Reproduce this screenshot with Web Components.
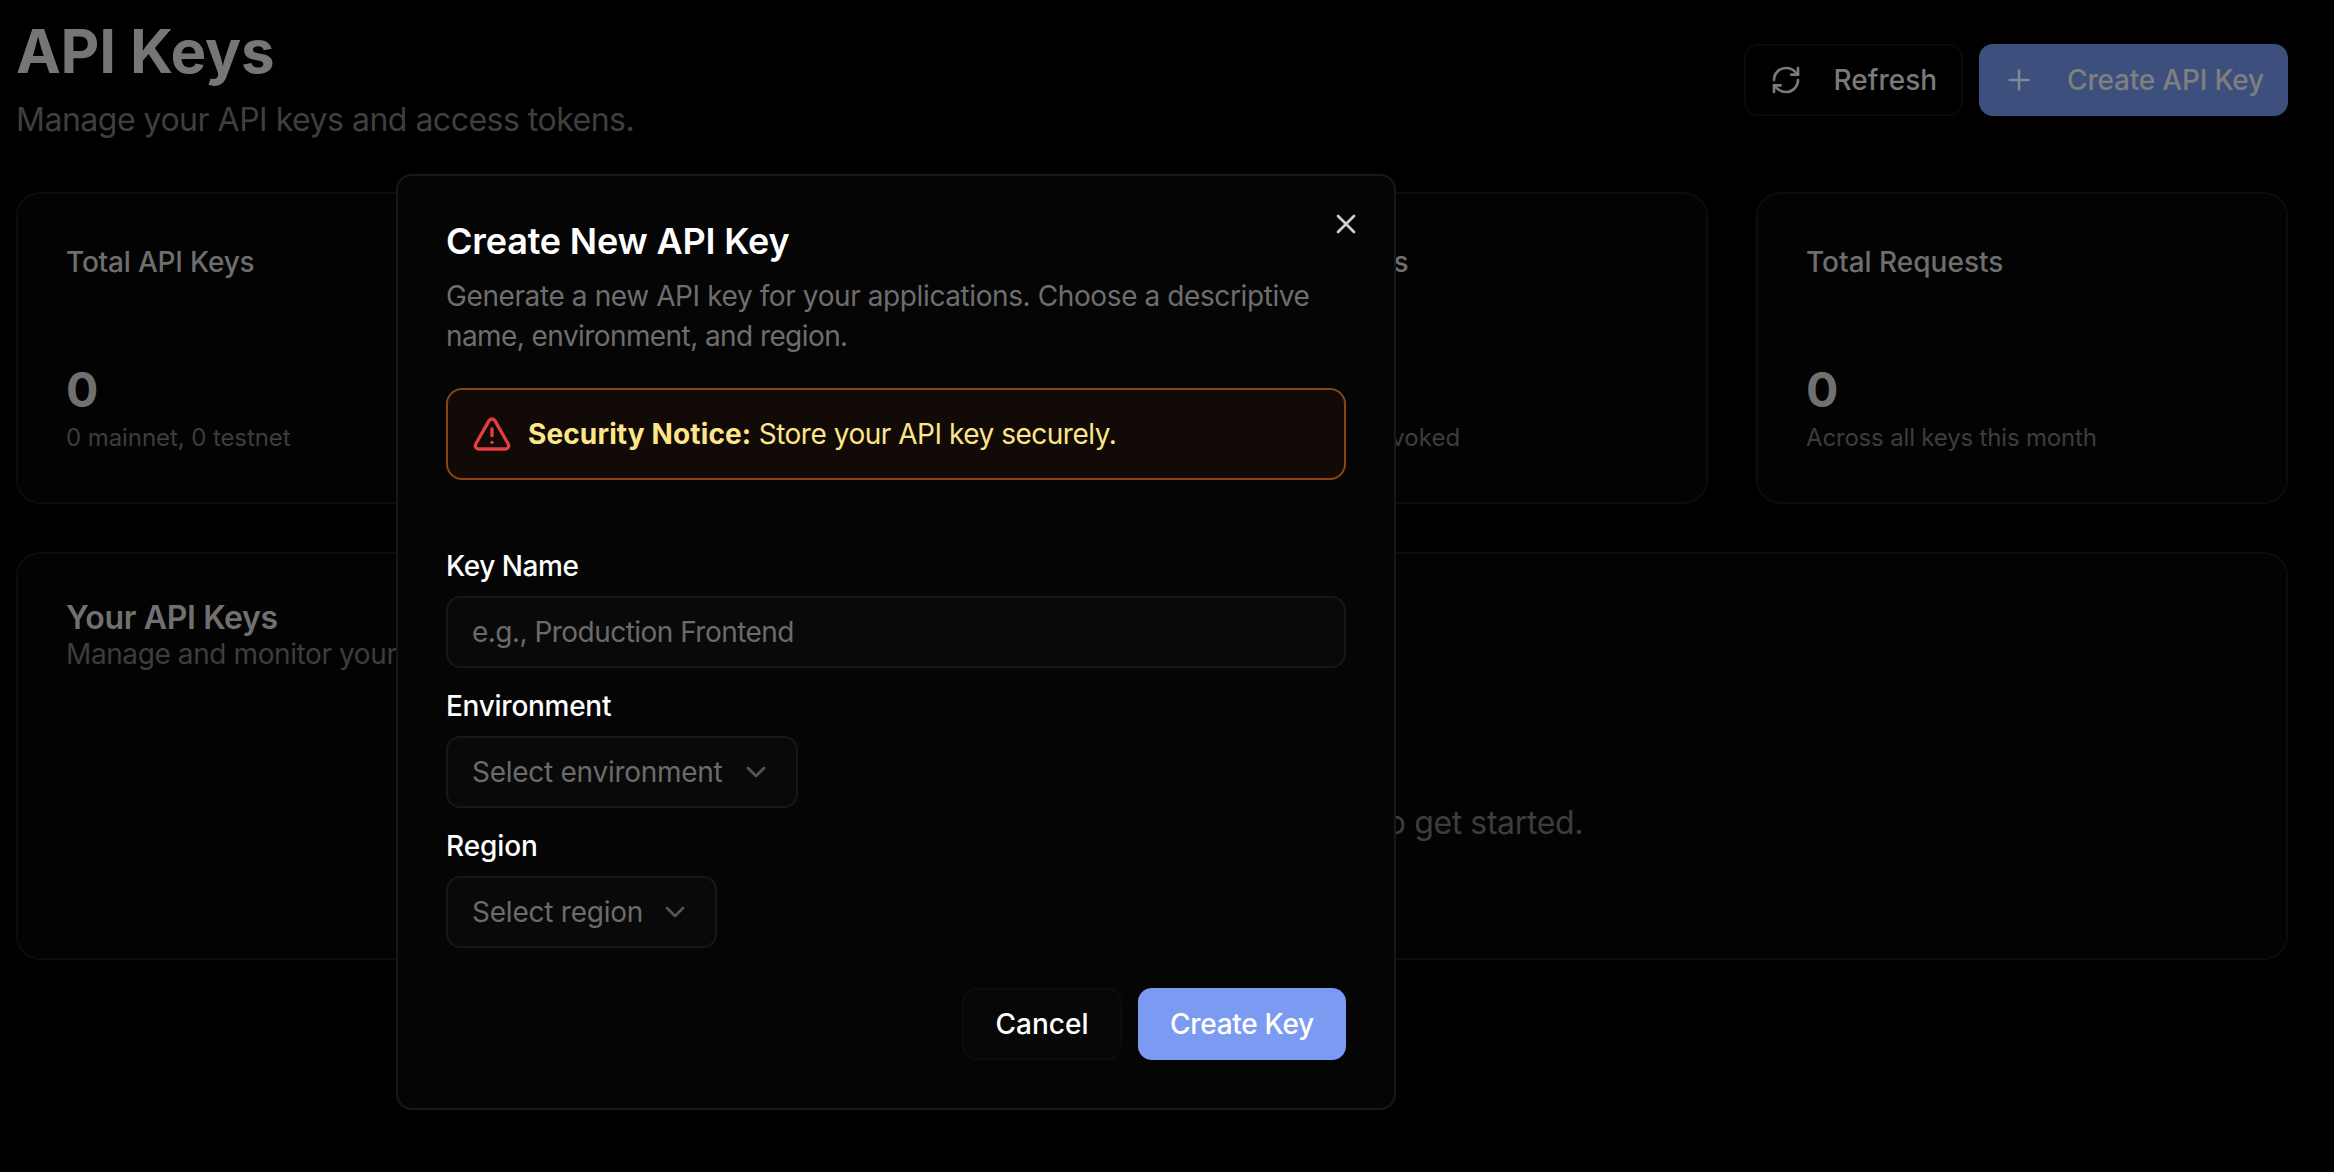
<!doctype html>
<html><head><meta charset="utf-8"><style>
html,body{margin:0;background:#000;height:100%;overflow:hidden}
body{font-family:Inter,"Liberation Sans",sans-serif;}
</style></head><body>
<keys-page>
<page-header slot="header"></page-header>
<stat-card label="Total API Keys" value="0" sub="0 mainnet, 0 testnet" l="-.2" s="-.08"></stat-card>
<stat-card label="Active Keys" value="0" sub="Currently active" l="0" s="0"></stat-card>
<stat-card label="Inactive Keys" value="0" sub="0 expired, 0 revoked" l=".4" s=".08"></stat-card>
<stat-card label="Total Requests" value="0" sub="Across all keys this month" l="0" s="-.17"></stat-card>
<keys-panel slot="panel"></keys-panel>
</keys-page>
<create-dialog></create-dialog>
<script>
const icons={
refresh:'<path d="M3 12a9 9 0 0 1 9-9 9.75 9.75 0 0 1 6.74 2.74L21 8"/><path d="M21 3v5h-5"/><path d="M21 12a9 9 0 0 1-9 9 9.75 9.75 0 0 1-6.74-2.74L3 16"/><path d="M8 16H3v5"/>',
plus:'<path d="M5 12h14"/><path d="M12 5v14"/>',
x:'<path d="M18 6 6 18"/><path d="m6 6 12 12"/>',
chev:'<path d="m6 9 6 6 6-6"/>',
alert:'<path d="m21.73 18-8-14a2 2 0 0 0-3.48 0l-8 14A2 2 0 0 0 4 21h16a2 2 0 0 0 1.73-3"/><path d="M12 9v4"/><path d="M12 17h.01"/>'};
const svg=(n,s,c)=>`<svg xmlns="http://www.w3.org/2000/svg" width="${s}" height="${s}" viewBox="0 0 24 24" fill="none" stroke="${c}" stroke-width="2" stroke-linecap="round" stroke-linejoin="round" style="display:block;flex:none">${icons[n]}</svg>`;
function def(name,html){customElements.define(name,class extends HTMLElement{connectedCallback(){if(this.shadowRoot)return;const r=this.attachShadow({mode:'open'});r.innerHTML=typeof html==='function'?html(this):html;}});}
def('keys-page',`<style>:host{display:block;padding:16px 46px 0 16px}
.cards{display:grid;grid-template-columns:repeat(4,1fr);gap:48px;margin:48px 0}
</style><slot name="header"></slot><div class="cards"><slot></slot></div><slot name="panel"></slot>`);
def('page-header',`<style>:host{display:flex;justify-content:space-between;align-items:center;height:128px}
h1{margin:0;font:700 60px/70px Inter,sans-serif;color:#767676;letter-spacing:-.2px}
p{margin:10px 0 0;font:400 32px/48px Inter,sans-serif;color:#3f3f3f;letter-spacing:-.5px}
.acts{display:flex;gap:16px}
button{all:unset;box-sizing:border-box;display:flex;align-items:center;gap:32px;height:72px;padding:0 24px;border-radius:14px;font:500 28px/40px Inter,sans-serif}
.o{border:2px solid #0a0a0a;color:#7a7a7a}
.p{background:#3d4f7c;color:#7f7f7f;letter-spacing:-.2px}
</style><div><h1>API Keys</h1><p>Manage your API keys and access tokens.</p></div>
<div class="acts"><button class="o">${svg('refresh',32,'#7a7a7a')}Refresh</button><button class="p">${svg('plus',32,'#7f8694')}Create API Key</button></div>`);
def('stat-card',h=>`<style>:host{display:block;box-sizing:border-box;height:312px;padding:48px;border:2px solid #0c0c0c;border-radius:24px;background:#030303}
.l{font:500 28px/40px Inter,sans-serif;color:#6e6e6e;letter-spacing:${h.getAttribute('l')}px}
.v{margin-top:76px;font:700 48px/64px Inter,sans-serif;color:#707070}
.s{font:400 24px/32px Inter,sans-serif;color:#3d3d3d;letter-spacing:${h.getAttribute('s')}px}
</style><div class="l">${h.getAttribute('label')}</div><div class="v">${h.getAttribute('value')}</div><div class="s">${h.getAttribute('sub')}</div>`);
def('keys-panel',`<style>:host{display:block;box-sizing:border-box;height:408px;padding:48px;border:2px solid #0c0c0c;border-radius:24px;background:#030303}
h2{margin:0;font:600 32px/32px Inter,sans-serif;color:#707070;letter-spacing:-.35px}
p{margin:0;font:400 28px/40px Inter,sans-serif;color:#3d3d3d;letter-spacing:-.4px}
.e{margin-top:125px;text-align:center;font:400 32px/48px Inter,sans-serif;color:#3d3d3d;letter-spacing:-.38px}
</style><h2>Your API Keys</h2><p>Manage and monitor your API keys</p><div class="e">No API keys found. Create your first API key to get started.</div>`);
def('key-field',h=>`<style>:host{display:block}
label{display:block;font:500 28px/28px Inter,sans-serif;color:#fff;margin-bottom:16px;letter-spacing:${h.getAttribute('ls')}px}
</style><label>${h.getAttribute('label')}</label><slot></slot>`);
def('select-box',h=>`<style>:host{display:flex;width:fit-content;box-sizing:border-box;align-items:center;gap:${h.getAttribute('gap')}px;height:72px;padding:0 24px;border:2px solid #171717;border-radius:14px;background:#090909;font:400 28px/40px Inter,sans-serif;color:#6b6b6b;letter-spacing:${h.getAttribute('ls')}px}
</style>${h.getAttribute('text')}${svg('chev',32,'#555')}`);
def('text-box',h=>`<style>:host{display:flex;box-sizing:border-box;align-items:center;height:72px;padding:0 24px;border:2px solid #171717;border-radius:14px;background:#090909;font:400 28px/40px Inter,sans-serif;color:#6b6b6b;letter-spacing:-.53px}
</style>${h.getAttribute('placeholder')}`);
def('create-dialog',`<style>:host{position:absolute;left:396px;top:174px;width:1000px;height:936px;box-sizing:border-box;padding:48px;border:2px solid #181818;border-radius:16px;background:#050505;display:flex;flex-direction:column}
h2{margin:0 0 2px;font:600 36px/34px Inter,sans-serif;color:#fff;letter-spacing:-.17px}
.d{margin:16px 0 32px;font:400 28px/40px Inter,sans-serif;color:#6e6e6e;letter-spacing:-.4px}
.d span{letter-spacing:-.58px}
.a{display:flex;align-items:center;gap:16px;box-sizing:border-box;height:92px;padding:24px;border:2px solid #8b4513;border-radius:16px;background:#120a07;font:400 28px/40px Inter,sans-serif;color:#fde68a;letter-spacing:-.48px}
b{font-weight:700;letter-spacing:.12px}
.f{display:flex;flex-direction:column;gap:24px;margin-top:72px}
.b{display:flex;justify-content:flex-end;gap:16px;margin-top:40px}
button{all:unset;box-sizing:border-box;display:flex;align-items:center;justify-content:center;height:72px;border-radius:14px;font:500 28px/40px Inter,sans-serif;color:#fff}
.c{width:160px;border:2px solid #0c0c0c;background:#070707}
.k{width:208px;background:#7b9bf3;letter-spacing:-.3px}
.x{position:absolute;right:32px;top:32px;line-height:0}
</style><h2>Create New API Key</h2>
<div class="d">Generate a new API key for your applications. Choose a descriptive <span>name, environment, and region.</span></div>
<div class="a">${svg('alert',40,'#e53e3e')}<span><b>Security Notice:</b> Store your API key securely.</span></div>
<div class="f"><key-field label="Key Name" ls="-.45"><text-box placeholder="e.g., Production Frontend"></text-box></key-field>
<key-field label="Environment" ls="-.27"><select-box text="Select environment" ls="-.27" gap="17"></select-box></key-field>
<key-field label="Region" ls="-.1"><select-box text="Select region" ls="-.23" gap="16"></select-box></key-field></div>
<div class="b"><button class="c">Cancel</button><button class="k">Create Key</button></div>
<div class="x">${svg('x',32,'#cfcfcf')}</div>`);
</script>
</body></html>
